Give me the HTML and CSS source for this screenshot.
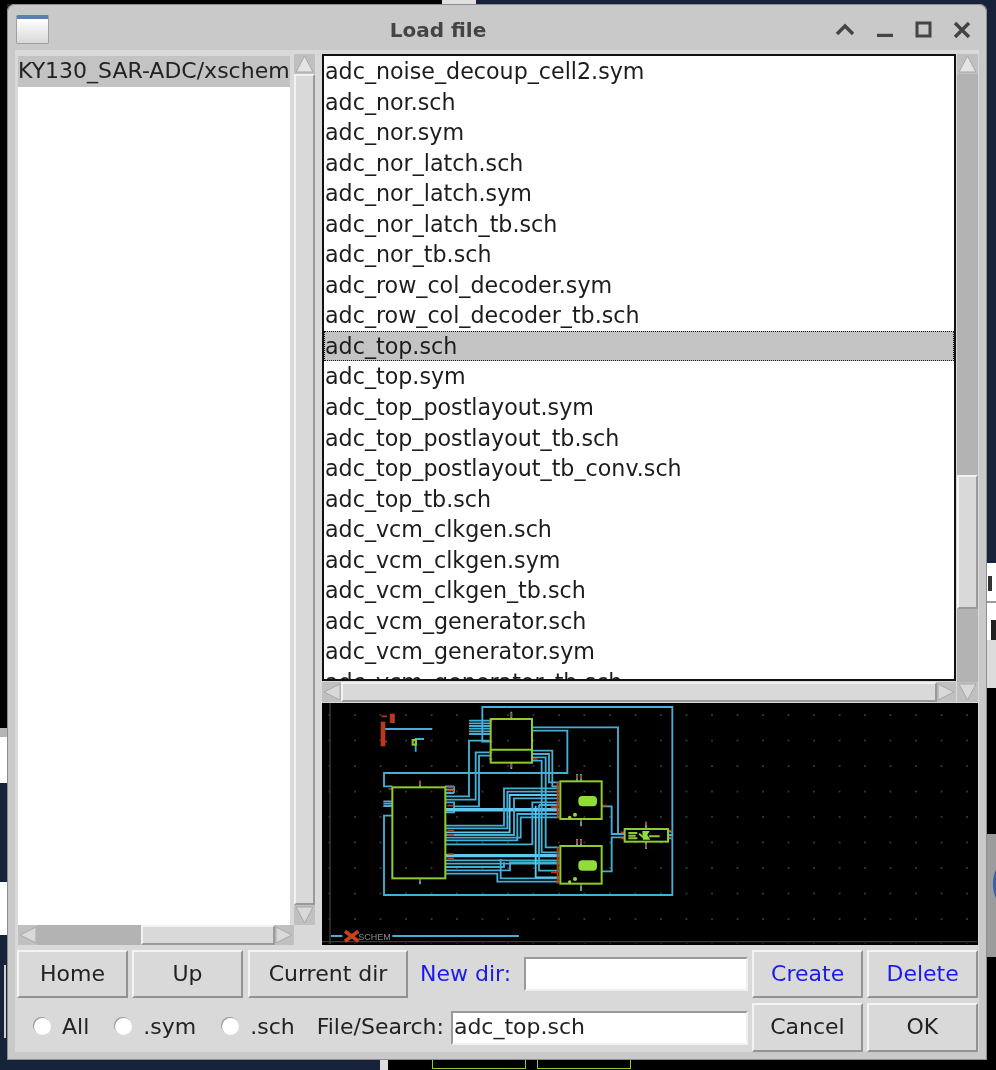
FILE: index.html
```html
<!DOCTYPE html>
<html lang="en">
<head>
    <meta charset="UTF-8">
    <meta name="viewport" content="width=device-width, initial-scale=1.0">
    <title>Load file</title>
    <link rel="stylesheet" href="styles.css">
</head>
<body>
<div class="desktop">
    <!-- bits of other windows showing behind the dialog -->
    <div class="bg bg-top-black"></div>
    <div class="bg bg-top-white"></div>
    <div class="bg bg-left-black"></div>
    <div class="bg bg-left-grey"></div>
    <div class="bg bg-left-white1"></div>
    <div class="bg bg-left-white2"></div>
    <div class="bg bg-left-line"></div>
    <div class="bg bg-bottom-strip"></div>
    <div class="bg bg-bottom-black"></div>
    <div class="bg bg-box1"></div>
    <div class="bg bg-box2"></div>
    <div class="bg bg-right-white"></div>
    <div class="bg bg-right-glyph"></div>
    <div class="bg bg-right-rule"></div>
    <div class="bg bg-right-mark"></div>
    <div class="bg bg-right-light"></div>
    <div class="bg bg-right-black"></div>
    <div class="bg bg-right-grey"></div>
    <div class="bg bg-right-circle"></div>

    <div class="window">
        <div class="titlebar">
            <div class="app-icon"></div>
            <div class="title">Load file</div>
            <div class="controls">
                <svg width="20" height="14" viewBox="0 0 20 14"><path d="M2 11 L10 3 L18 11" fill="none" stroke="#444" stroke-width="3.4"/></svg>
                <svg width="20" height="14" viewBox="0 0 20 14"><path d="M2 12.5 H18" fill="none" stroke="#444" stroke-width="3.4"/></svg>
                <svg width="18" height="18" viewBox="0 0 18 18"><rect x="2" y="2" width="13" height="13" fill="none" stroke="#444" stroke-width="3"/></svg>
                <svg width="18" height="18" viewBox="0 0 18 18"><path d="M2 2 L16 16 M16 2 L2 16" fill="none" stroke="#444" stroke-width="3.4"/></svg>
            </div>
        </div>

        <div class="inner">
            <div class="panes">
                <div class="pane-left">
                    <div class="list-row">
                        <div class="list list-dirs">
                            <div class="item item-sel">KY130_SAR-ADC/xschem</div>
                        </div>
                        <div class="vscroll">
                            <div class="arrow"><svg width="21" height="20" viewBox="0 0 21 20"><path d="M10.5 2 L19 18 H2 Z" fill="#e4e4e4" stroke="#a8a8a8"/></svg></div>
                            <div class="thumb grow"></div>
                            <div class="arrow"><svg width="21" height="20" viewBox="0 0 21 20"><path d="M10.5 18 L19 2 H2 Z" fill="#d9d9d9" stroke="#a8a8a8"/></svg></div>
                        </div>
                    </div>
                    <div class="hscroll hscroll-left">
                        <div class="arrow"><svg width="19" height="20" viewBox="0 0 19 20"><path d="M2 10 L18 2 V18 Z" fill="#d9d9d9" stroke="#a8a8a8"/></svg></div>
                        <div class="trough trough-a"></div>
                        <div class="thumb thumb-h-left"></div>
                        <div class="arrow"><svg width="19" height="20" viewBox="0 0 19 20"><path d="M17 10 L1 2 V18 Z" fill="#d9d9d9" stroke="#a8a8a8"/></svg></div>
                    </div>
                </div>

                <div class="pane-right">
                    <div class="files-row">
                        <div class="files-col">
                            <div class="list list-files">
                                <div class="item">adc_noise_decoup_cell2.sym</div>
                                <div class="item">adc_nor.sch</div>
                                <div class="item">adc_nor.sym</div>
                                <div class="item">adc_nor_latch.sch</div>
                                <div class="item">adc_nor_latch.sym</div>
                                <div class="item">adc_nor_latch_tb.sch</div>
                                <div class="item">adc_nor_tb.sch</div>
                                <div class="item">adc_row_col_decoder.sym</div>
                                <div class="item">adc_row_col_decoder_tb.sch</div>
                                <div class="item item-sel item-active">adc_top.sch</div>
                                <div class="item">adc_top.sym</div>
                                <div class="item">adc_top_postlayout.sym</div>
                                <div class="item">adc_top_postlayout_tb.sch</div>
                                <div class="item">adc_top_postlayout_tb_conv.sch</div>
                                <div class="item">adc_top_tb.sch</div>
                                <div class="item">adc_vcm_clkgen.sch</div>
                                <div class="item">adc_vcm_clkgen.sym</div>
                                <div class="item">adc_vcm_clkgen_tb.sch</div>
                                <div class="item">adc_vcm_generator.sch</div>
                                <div class="item">adc_vcm_generator.sym</div>
                                <div class="item">adc_vcm_generator_tb.sch</div>
                            </div>
                            <div class="hscroll hscroll-right">
                                <div class="arrow"><svg width="19" height="20" viewBox="0 0 19 20"><path d="M2 10 L18 2 V18 Z" fill="#d9d9d9" stroke="#a8a8a8"/></svg></div>
                                <div class="thumb grow"></div>
                                <div class="arrow"><svg width="19" height="20" viewBox="0 0 19 20"><path d="M17 10 L1 2 V18 Z" fill="#d9d9d9" stroke="#a8a8a8"/></svg></div>
                            </div>
                        </div>
                        <div class="vscroll vscroll-right">
                            <div class="arrow"><svg width="21" height="20" viewBox="0 0 21 20"><path d="M10.5 2 L19 18 H2 Z" fill="#e4e4e4" stroke="#a8a8a8"/></svg></div>
                            <div class="trough trough-b"></div>
                            <div class="thumb thumb-v-right"></div>
                            <div class="trough grow"></div>
                            <div class="arrow"><svg width="21" height="20" viewBox="0 0 21 20"><path d="M10.5 18 L19 2 H2 Z" fill="#d9d9d9" stroke="#a8a8a8"/></svg></div>
                        </div>
                    </div>

                    <div class="preview">
                        <svg class="schematic" viewBox="9 12 1965 723" width="655" height="241">
                            <defs>
                                <pattern id="dots" x="108" y="48" width="76.5" height="76.5" patternUnits="userSpaceOnUse">
                                    <rect x="-2.5" y="-2.5" width="5" height="5" fill="#444"/>
                                    <rect x="74" y="-2.5" width="5" height="5" fill="#444"/>
                                    <rect x="-2.5" y="74" width="5" height="5" fill="#444"/>
                                    <rect x="74" y="74" width="5" height="5" fill="#444"/>
                                </pattern>
                            </defs>
                            <rect x="9" y="12" width="1965" height="723" fill="#000"/>
                            <rect x="9" y="12" width="1965" height="723" fill="url(#dots)"/>
                            <path d="M33 12 V735 M9 728 H1974" stroke="#3c3c3c" stroke-width="4" fill="none"/>

                            <g fill="none" stroke="#45b0d6" stroke-width="5.5">
                                <path d="M515 128 H490 V24 H1060 V588 H195 V350 H220"/>
                                <path d="M220 262 H195 V222 H745 V95 H640"/>
                                <path d="M640 85 H897 V405 H917"/>
                                <path d="M450 65 H515 M450 73 H515 M450 81 H515 M450 89 H515 M450 97 H515 M450 105 H515"/>
                                <path d="M193 307 H220 M193 314 H220 M193 321 H220"/>
                                <path d="M378 262 H405 M378 272 H405 M378 282 H405 M405 262 V282"/>
                                <path d="M378 292 H450 V125 H515"/>
                                <path d="M378 302 H470 V160 H515"/>
                                <path d="M405 322 H480 V170 H515 M378 340 H405 V310 H378"/>
                                <path d="M380 330 H720 M380 335 H720" stroke="#5fc8ee"/>
                                <path d="M380 380 H555 V268 H720"/>
                                <path d="M380 388 H565 V278 H720"/>
                                <path d="M380 400 H572 V288 H720" stroke="#5fc8ee"/>
                                <path d="M380 408 H585 V298 H720"/>
                                <path d="M380 416 H605 V355 H720"/>
                                <path d="M380 424 H595 V345 H720"/>
                                <path d="M380 436 H640 V310 H720"/>
                                <path d="M640 155 H700 V262 H720"/>
                                <path d="M640 165 H690 V250 H720"/>
                                <path d="M640 175 H680 V445 H720"/>
                                <path d="M640 185 H668 V460 H720"/>
                                <path d="M380 468 H720 M380 472 H720" stroke="#5fc8ee"/>
                                <path d="M380 484 H720 M380 494 H720"/>
                                <path d="M380 504 H555 V490"/>
                                <path d="M380 514 H573 V490 H720"/>
                                <path d="M380 524 H535 V548 H720"/>
                                <path d="M545 480 V538 H720"/>
                                <path d="M650 320 V535 H720" stroke="#5fc8ee"/>
                                <path d="M660 318 V515 H720 M660 318 H720"/>
                                <path d="M848 322 H878 V405 H917"/>
                                <path d="M848 517 H878 V415 H917"/>
                                <path d="M1047 398 H1060 M1047 408 H1060 M1047 418 H1060"/>
                                <path d="M303 245 V265 M303 538 V556 M577 38 V60 M577 190 V210 M786 360 V382 M786 554 V576 M774 225 V247 M786 225 V247 M774 420 V441 M786 420 V441 M981 368 V390 M981 428 V450"/>
                                <path d="M198 90 H340 M315 120 H290 V158"/>
                                <path d="M36 711 H70 M220 711 H600"/>
                            </g>

                            <g fill="none" stroke="#b8391c" stroke-width="5">
                                <path d="M303 245 V258 M303 538 V546 M577 42 V54 M577 195 V204 M774 228 V240 M786 228 V240 M774 423 V434 M786 423 V434 M786 360 V368 M786 554 V562 M981 368 V378 M981 436 V446"/>
                                <path d="M510 65 H520 M510 128 H520 M510 160 H520 M510 180 H520 M640 180 H655 M848 320 H864"/>
                                <path d="M208 270 H220 M385 265 H405 M385 275 H405 M385 320 H405 M385 395 H405 M385 408 H405 M385 465 H405 M385 478 H405"/>
                                <path d="M716 250 V358 M716 445 V554 M696 325 H716 M696 520 H716" stroke-width="6"/>
                                <path d="M905 400 H917 M905 418 H917 M1047 395 H1060 M1047 415 H1060"/>
                                <path d="M192 68 V142" stroke-width="14"/>
                                <path d="M220 44 V72" stroke-width="15"/>
                                <path d="M188 52 H204 M186 128 H204"/>
                                <path d="M78 697 L118 727 M118 697 L78 727" stroke-width="11" stroke="#c8401c"/>
                            </g>

                            <g fill="none" stroke="#8fcb2e" stroke-width="6">
                                <rect x="515" y="60" width="124" height="131"/>
                                <path d="M515 152 H639"/>
                                <rect x="220" y="265" width="159" height="273"/>
                                <rect x="724" y="247" width="124" height="113"/>
                                <rect x="724" y="441" width="124" height="113"/>
                                <rect x="917" y="390" width="130" height="38"/>
                                <path d="M928 402 H955 M928 410 H950 M928 418 H955 M960 404 L975 416 M990 412 H1022"/>
                                <rect x="281" y="123" width="10" height="14"/>
                            </g>
                            <g fill="#8fdc3a">
                                <rect x="778" y="291" width="56" height="31" rx="12"/>
                                <rect x="778" y="484" width="56" height="31" rx="12"/>
                                <circle cx="752" cy="355" r="5"/>
                                <circle cx="768" cy="347" r="6"/>
                                <circle cx="752" cy="549" r="5"/>
                                <circle cx="768" cy="540" r="6"/>
                                <path d="M970 396 H992 L985 408 L994 422 H972 Z"/>
                            </g>
                            <text class="logo-text" x="118" y="722">SCHEM</text>
                        </svg>
                    </div>
                </div>
            </div>

            <div class="bottom-row row-one">
                <button class="btn btn-std" type="button">Home</button>
                <button class="btn btn-std" type="button">Up</button>
                <button class="btn btn-cur" type="button">Current dir</button>
                <span class="lbl lbl-blue">New dir:</span>
                <div class="entry entry-dir"></div>
                <button class="btn btn-std btn-blue" type="button">Create</button>
                <button class="btn btn-std btn-blue" type="button">Delete</button>
            </div>
            <div class="bottom-row row-two">
                <span class="radio"></span><span class="lbl lbl-all">All</span>
                <span class="radio"></span><span class="lbl lbl-sym">.sym</span>
                <span class="radio"></span><span class="lbl lbl-sch">.sch</span>
                <span class="lbl lbl-search">File/Search:</span>
                <div class="entry entry-file">adc_top.sch</div>
                <button class="btn btn-std" type="button">Cancel</button>
                <button class="btn btn-std" type="button">OK</button>
            </div>
        </div>
    </div>
</div>
</body>
</html>
```

FILE: styles.css
```css
html, body {
    margin: 0;
    padding: 0;
}

body {
    font-family: "DejaVu Sans", sans-serif;
    font-size: 22px;
    color: #222;
}

.desktop {
    position: relative;
    width: 996px;
    height: 1070px;
    overflow: hidden;
    background: #17233a;
    filter: blur(0.5px);
}

/* stuff behind the dialog */
.bg { position: absolute; }
.bg-top-black { left: 0; top: 0; width: 442px; height: 4px; background: #000; }
.bg-top-white { left: 442px; top: 0; width: 34px; height: 4px; background: #e0e0e0; }
.bg-left-black { left: 0; top: 0; width: 7px; height: 728px; background: #000; }
.bg-left-grey { left: 0; top: 728px; width: 7px; height: 9px; background: #b5b5b5; }
.bg-left-white1 { left: 0; top: 737px; width: 7px; height: 46px; background: #fff; }
.bg-left-white2 { left: 0; top: 882px; width: 7px; height: 53px; background: #fff; }
.bg-left-line { left: 4px; top: 965px; width: 2px; height: 73px; background: #cfcfcf; }
.bg-bottom-strip { left: 380px; top: 1060px; width: 8px; height: 10px; background: #ddd; }
.bg-bottom-black { left: 388px; top: 1060px; width: 608px; height: 10px; background: #000; }
.bg-box1 { left: 432px; top: 1060px; width: 92px; height: 8px; border: 1px solid #8fcb2e; border-top: none; }
.bg-box2 { left: 537px; top: 1060px; width: 92px; height: 8px; border: 1px solid #8fcb2e; border-top: none; }
.bg-right-white { left: 987px; top: 563px; width: 9px; height: 77px; background: #fff; }
.bg-right-glyph { left: 988px; top: 576px; width: 4px; height: 15px; background: #333; }
.bg-right-rule { left: 987px; top: 601px; width: 9px; height: 2px; background: #9a9a9a; }
.bg-right-mark { left: 991px; top: 620px; width: 5px; height: 20px; background: #222; }
.bg-right-light { left: 987px; top: 640px; width: 9px; height: 48px; background: #dcdcdc; }
.bg-right-black { left: 987px; top: 688px; width: 9px; height: 382px; background: #000; }
.bg-right-grey { left: 987px; top: 834px; width: 9px; height: 123px; background: #9c9c9c; }
.bg-right-circle { left: 993px; top: 864px; width: 20px; height: 40px; border-radius: 50%; background: #3a5fa8; }

/* free window on the desktop */
.window {
    position: absolute;
    left: 7px;
    top: 4px;
    width: 980px;
    height: 1056px;
    box-sizing: border-box;
    padding: 0 8px 8px 8px;
    display: flex;
    flex-direction: column;
    background: #c9c9c9;
    border-radius: 8px 8px 0 0;
    box-shadow: inset 0 0 0 1px #8e8e8e;
}

.titlebar {
    height: 46px;
    display: flex;
    align-items: center;
    position: relative;
    flex-shrink: 0;
}

.app-icon {
    width: 33px;
    height: 29px;
    margin-left: 1px;
    margin-top: 4px;
    box-sizing: border-box;
    border: 1px solid #a0a0a0;
    border-top: 4px solid #5b7fb5;
    border-radius: 2px;
    background: linear-gradient(#ffffff, #d8d8d8);
}

.title {
    flex: 1;
    text-align: center;
    font-weight: bold;
    font-size: 20px;
    color: #444;
    margin-top: 5px;
    padding-right: 8px;
}

.controls {
    display: flex;
    align-items: center;
    gap: 20px;
    margin-top: 5px;
    margin-right: 8px;
}

.inner {
    flex: 1;
    display: flex;
    flex-direction: column;
    background: #d9d9d9;
    padding: 4px 1px 0 2px;
    min-height: 0;
}

.panes {
    display: flex;
    height: 892px;
    gap: 7px;
}

.pane-left {
    width: 298px;
    display: flex;
    flex-direction: column;
}

.list-row {
    flex: 1;
    display: flex;
    min-height: 0;
}

.list {
    background: #fff;
    overflow: hidden;
    line-height: 30.55px;
    white-space: nowrap;
}

.list-dirs {
    width: 273px;
    margin: 2px 4px 0 1px;
}

.list-dirs .item {
    padding-left: 0;
}

.item {
    height: 30.55px;
    box-sizing: border-box;
    padding-left: 2px;
}

.item-sel {
    background: #c3c3c3;
}

.item-active {
    outline: 1px dotted #111;
    outline-offset: -1px;
}

.vscroll {
    width: 21px;
    display: flex;
    flex-direction: column;
    background: #b3b3b3;
    flex-shrink: 0;
}

.hscroll {
    height: 20px;
    display: flex;
    background: #b3b3b3;
    flex-shrink: 0;
}

.arrow {
    display: flex;
    flex-shrink: 0;
    background: #c0c0c0;
}

.thumb {
    box-sizing: border-box;
    background: #d9d9d9;
    border: 2px solid;
    border-color: #f2f2f2 #9a9a9a #9a9a9a #f2f2f2;
}

.grow {
    flex: 1;
}

.hscroll-left {
    width: 276px;
    margin-left: 1px;
}

.trough-a { width: 104px; }
.thumb-h-left { width: 134px; }

.pane-right {
    flex: 1;
    display: flex;
    flex-direction: column;
    min-width: 0;
}

.files-row {
    display: flex;
    height: 648px;
    gap: 1px;
}

.files-col {
    flex: 1;
    display: flex;
    flex-direction: column;
    min-width: 0;
}

.list-files {
    height: 627px;
    box-sizing: border-box;
    border: 2px solid #111;
    font-size: 22.2px;
    color: #1c1c1c;
}

.list-files .item {
    padding-left: 1px;
}

.hscroll-right {
    margin-top: 1px;
}

.vscroll-right {
    width: 21px;
}

.trough-b { height: 401px; flex-shrink: 0; }
.thumb-v-right { height: 134px; flex-shrink: 0; }

.preview {
    height: 242px;
    background: #000;
    margin-top: 1px;
}

.schematic {
    display: block;
}

.logo-text {
    font-family: "Liberation Sans", sans-serif;
    font-size: 27px;
    fill: #8a8a8a;
}

.bottom-row {
    display: flex;
    align-items: center;
}

.row-one {
    height: 48px;
    margin-top: 5px;
}

.row-two {
    height: 49px;
    margin-top: 5px;
}

.btn {
    box-sizing: border-box;
    height: 100%;
    font-family: inherit;
    font-size: 22px;
    color: #222;
    background: #d9d9d9;
    border: 2px solid;
    border-color: #f4f4f4 #929292 #929292 #f4f4f4;
    padding: 0 0 2px 0;
    flex-shrink: 0;
}

.btn-std { width: 111px; }
.btn-cur { width: 160px; margin-left: 5px; }
.btn-std + .btn-std { margin-left: 4px; }
.btn-blue { color: #1a1aee; }

.row-one .btn-std:nth-child(2) { margin-left: 4px; }

.lbl {
    white-space: nowrap;
    color: #222;
    padding-bottom: 2px;
}

.lbl-blue {
    color: #1a1aee;
    margin-left: 12px;
}

.entry {
    box-sizing: border-box;
    height: 34px;
    background: #fff;
    border: 2px solid;
    border-color: #9a9a9a #f0f0f0 #f0f0f0 #9a9a9a;
    line-height: 28px;
    padding-left: 1px;
    flex-shrink: 0;
}

.entry-dir {
    width: 224px;
    margin-left: 13px;
    margin-right: 4px;
}

.entry-file {
    width: 297px;
    margin-left: 7px;
    margin-right: 4px;
}

.radio {
    width: 17px;
    height: 17px;
    margin-bottom: 2px;
    border-radius: 50%;
    background: #fff;
    box-shadow: -1px -1px 0 #9a9a9a;
    flex-shrink: 0;
}

.radio:first-child { margin-left: 17px; }

.lbl-all { margin-left: 11px; margin-right: 26px; }
.lbl-sym { margin-left: 11px; margin-right: 26px; }
.lbl-sch { margin-left: 11px; margin-right: 22px; }
```
